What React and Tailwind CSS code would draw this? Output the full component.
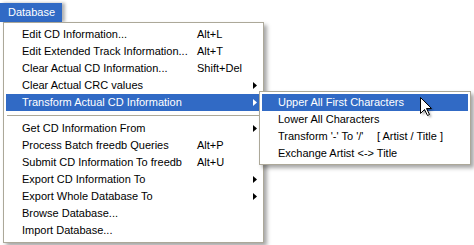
import React from 'react';

// XP-style "Database" menu with the "Transform Actual CD Information" submenu open
const mainItems = [
    { label: 'Edit CD Information...', accel: 'Alt+L' },
    { label: 'Edit Extended Track Information...', accel: 'Alt+T' },
    { label: 'Clear Actual CD Information...', accel: 'Shift+Del' },
    { label: 'Clear Actual CRC values', sub: true },
    { label: 'Transform Actual CD Information', sub: true, active: true },
    { sep: true },
    { label: 'Get CD Information From', sub: true },
    { label: 'Process Batch freedb Queries', accel: 'Alt+P' },
    { label: 'Submit CD Information To freedb', accel: 'Alt+U' },
    { label: 'Export CD Information To', sub: true },
    { label: 'Export Whole Database To', sub: true },
    { label: 'Browse Database...' },
    { label: 'Import Database...' },
];

function Arrow({ white }) {
    return (
        <svg width="4" height="7" viewBox="0 0 4 7" className="shrink-0">
            <polygon points="0,0 4,3.5 0,7" fill={white ? '#ffffff' : '#000000'} />
        </svg>
    );
}

function MenuRow({ item }) {
    if (item.sep) {
        return (
            <div className="h-[9px] flex items-center px-[1px]">
                <div className="w-full h-px bg-[#aca899]" />
            </div>
        );
    }
    return (
        <div className={`h-[17px] flex items-center pl-[16px] pr-[4px] ${item.active ? 'bg-[#316ac5] text-white' : 'text-black'}`}>
            <span className="w-[175px] shrink-0 whitespace-nowrap">{item.label}</span>
            <span className="flex-1 whitespace-nowrap">{item.accel}</span>
            {item.sub && <Arrow white={item.active} />}
        </div>
    );
}

export default function App() {
    return (
        <div className="relative w-[474px] h-[245px] bg-white overflow-hidden text-[11px] leading-[17px]" style={{ fontFamily: '"Liberation Sans", Arial, sans-serif' }}>
            {/* Menu bar title */}
            <div className="pt-[3px]">
                <div className="w-[62px] h-[19px] bg-[#316ac5] text-white flex items-center pl-[8px] shadow-[3px_0_3px_rgba(0,0,0,0.3)]">
                    Database
                </div>
            </div>

            {/* Main dropdown */}
            <div className="ml-[3px] w-[261px] border border-[#aca899] bg-white p-[2px] py-[3px] shadow-[3px_3px_4px_rgba(0,0,0,0.35)]">
                {mainItems.map((item, i) => (
                    <MenuRow key={i} item={item} />
                ))}
            </div>

            {/* Submenu */}
            <div className="absolute left-[259px] top-[91px] w-[212px] border border-[#aca899] bg-white p-[2px] shadow-[3px_3px_4px_rgba(0,0,0,0.35)]">
                <div className="h-[17px] flex items-center pl-[16px] bg-[#316ac5] text-white">Upper All First Characters</div>
                <div className="h-[17px] flex items-center pl-[16px]">Lower All Characters</div>
                <div className="h-[17px] flex items-center pl-[16px] whitespace-nowrap">
                    <span className="w-[99px]">Transform '-' To '/'</span>
                    <span>[ Artist / Title ]</span>
                </div>
                <div className="h-[17px] flex items-center pl-[16px]">Exchange Artist &lt;-&gt; Title</div>
            </div>

            {/* Mouse pointer */}
            <svg className="absolute left-[420px] top-[97px]" width="16" height="22" viewBox="0 0 16 22">
                <defs>
                    <filter id="cs" x="-50%" y="-50%" width="200%" height="200%">
                        <feGaussianBlur stdDeviation="1" />
                    </filter>
                </defs>
                <path d="M2.5,2.5 L2.5,18.5 L6.5,14.5 L9.5,20.5 L11.5,19.5 L8.5,13.5 L13.5,13.5 Z" fill="rgba(0,0,0,0.35)" filter="url(#cs)" />
                <path d="M0.5,0.5 L0.5,16.5 L4.5,12.5 L7.5,18.5 L9.5,17.5 L6.5,11.5 L11.5,11.5 Z" fill="#ffffff" stroke="#000000" strokeWidth="1" strokeLinejoin="miter" />
            </svg>
        </div>
    );
}
